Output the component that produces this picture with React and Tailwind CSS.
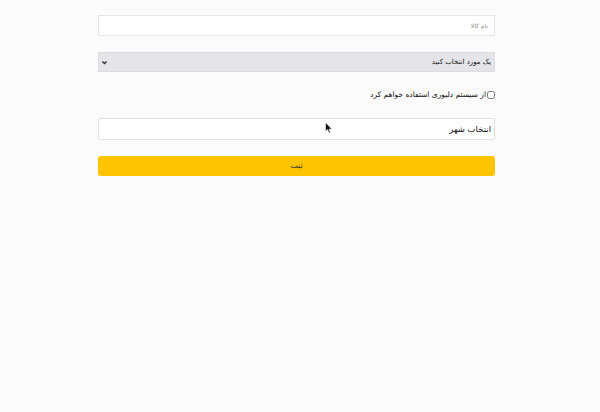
import { useState } from 'react';

const App = () => {
  const [delivery, setDelivery] = useState(false);

  return (
    <div dir="rtl" className="min-h-[412px] w-full bg-[#fbfbfb] relative" style={{ fontFamily: '"DejaVu Sans", sans-serif' }}>
      <div className="w-[397px] mr-[105px] pt-[15px] flex flex-col">
        {/* Product name */}
        <input
          type="text"
          placeholder="نام کالا"
          className="h-[21px] w-full bg-white border border-[#e6e6e6] px-[6px] text-[6px] text-gray-700 placeholder:text-[#8a8a8a] outline-none"
        />

        {/* Select */}
        <div className="mt-[16px] h-[20px] w-full bg-[#e4e4e9] border border-[#dcdce0] flex items-center justify-between pr-[3px] pl-[2px]">
          <span className="text-[7px] text-[#111]">یک مورد انتخاب کنید</span>
          <svg className="w-[7px] h-[7px] text-[#333]" viewBox="0 0 10 10" fill="none" stroke="currentColor" strokeWidth={2}>
            <path d="M2 3.5l3 3 3-3" />
          </svg>
        </div>

        {/* Delivery checkbox */}
        <label className="mt-[18px] h-[10px] flex items-center gap-[1px] text-[7.5px] text-[#111] font-medium">
          <input
            type="checkbox"
            checked={delivery}
            onChange={(e) => setDelivery(e.target.checked)}
            className="w-[8px] h-[8px] m-0"
          />
          <span>از سیستم دلیوری استفاده خواهم کرد</span>
        </label>

        {/* City */}
        <div className="mt-[18px] h-[22px] w-full bg-white border border-[#e2e2e2] rounded-[2px] flex items-center pr-[3px] pl-[5px] relative">
          <span className="text-[8.5px] text-[#111]">انتخاب شهر</span>
          <svg className="absolute left-[226px] top-[3px] w-[8px] h-[12px]" viewBox="0 0 8 12">
            <path d="M0.5 0.5 L0.5 9.5 L2.6 7.6 L4 11 L5.4 10.4 L4 7.1 L7 7.1 Z" fill="#111" stroke="#fff" strokeWidth={0.6} />
          </svg>
        </div>

        {/* Submit */}
        <button className="mt-[16px] h-[20px] w-full bg-[#ffc400] rounded-[3px] text-[8px] text-[#333] flex items-center justify-center">
          ثبت
        </button>
      </div>
    </div>
  );
};

export default App;
